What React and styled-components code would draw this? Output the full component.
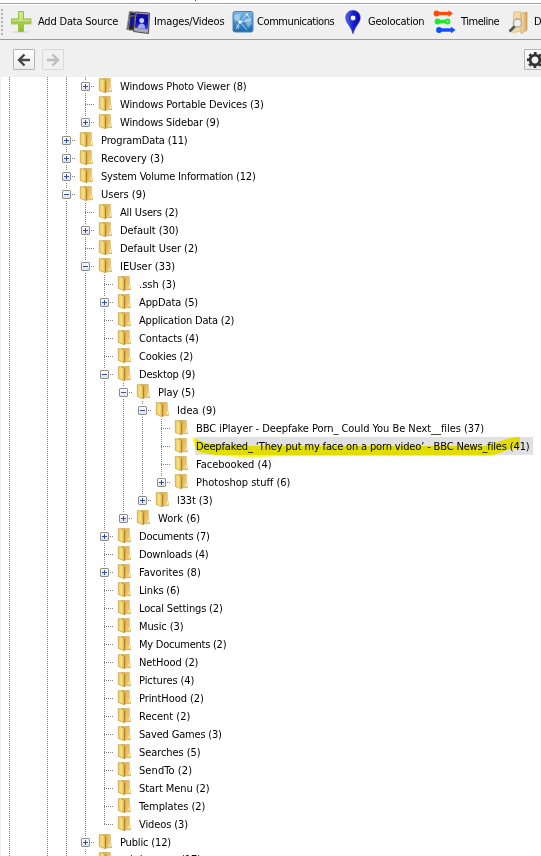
import React from "react";
import styled, { createGlobalStyle, css } from "styled-components";

const Global = createGlobalStyle`
  * { box-sizing: border-box; }
  body { margin: 0; background: #fff; overflow: hidden; }
`;

const Window = styled.main`
  width: 541px;
  height: 856px;
  overflow: hidden;
  display: flex;
  flex-direction: column;
  background: #f0f0f0;
  color: #000;
  font: 11px/18px "DejaVu Sans Condensed", "DejaVu Sans", sans-serif;
  white-space: nowrap;
`;
const TopEdge = styled.div`
  height: 4px;
  flex: none;
  background: #fff;
  border-bottom: 1px solid #a0a0a0;
  position: relative;
  &::after {
    content: "";
    position: absolute;
    left: 195px;
    top: 0;
    width: 1px;
    height: 1px;
    background: #555;
  }
`;
const Toolbar = styled.header`
  height: 36px;
  flex: none;
  display: flex;
  align-items: center;
  border-top: 1px solid #fff;
  border-bottom: 1px solid #9c9c9c;
`;
const Grip = styled.div`
  width: 2px;
  height: 27px;
  flex: none;
  margin: 0 8px 0 1px;
  background: repeating-linear-gradient(#b4b4b4 0 2px, transparent 2px 4px);
`;
const Tool = styled.div`
  display: flex;
  align-items: center;
  flex: none;
  width: ${(p) => p.$w}px;
  svg { flex: none; margin-right: ${(p) => p.$gap}px; }
`;
const Label = styled.span`
  display: inline-block;
  letter-spacing: ${(p) => p.$ls || 0}px;
`;
const NavBar = styled.nav`
  height: 37px;
  flex: none;
  display: flex;
  align-items: center;
  padding: 2px 0 0 13px;
  gap: 7px;
`;
const NavButton = styled.button`
  width: 22px;
  height: 21px;
  padding: 0;
  flex: none;
  display: grid;
  place-items: center;
  border: 1px solid ${(p) => (p.$off ? "#d9d9d9" : "#b4b4b4")};
  border-radius: 1px;
  background: ${(p) => (p.$off ? "#f0f0f0" : "linear-gradient(#fff, #ececec)")};
  color: ${(p) => (p.$off ? "#bdbdbd" : "#484848")};
  ${(p) => p.$end && css`margin-left: 453px;`}
`;
const Tree = styled.section`
  flex: 1;
  min-height: 0;
  overflow: hidden;
  background: #fff;
  box-shadow: inset 1px 0 #f0f0f0;
`;
const Row = styled.div`
  display: flex;
  height: 18px;
  svg { flex: none; margin-left: 3px; }
`;
const dotsV = "repeating-linear-gradient(#808080 0 1px, transparent 1px 2px)";
const dotsH = "repeating-linear-gradient(90deg, #808080 0 1px, transparent 1px 2px)";
const Guide = styled.i`
  width: 19px;
  height: 18px;
  flex: none;
  background: ${(p) => (p.$blank ? "none" : dotsV)} 9px 0 / 1px ${(p) => (p.$last ? 10 : 18)}px no-repeat
    ${(p) => p.$branch && css`, ${dotsH} 9px 9px / 10px 1px no-repeat`};
  display: grid;
  place-items: center;
`;
const Expander = styled.b`
  width: 9px;
  height: 9px;
  border: 1px solid #8c8c8c;
  border-radius: 1px;
  outline: 1px solid #fff;
  background:
    linear-gradient(#30509c, #30509c) 1px 3px / 5px 1px no-repeat,
    linear-gradient(#30509c, #30509c) 3px 1px / 1px ${(p) => (p.$open ? 0 : 5)}px no-repeat,
    linear-gradient(#fff, #e3e3e3);
`;
const NodeText = styled.span`
  margin-left: 5px;
  padding: 0 3px 0 1px;
  height: 18px;
  line-height: 20px;
  position: relative;
  letter-spacing: ${(p) => p.$ls || 0}px;
  background: ${(p) => (p.$selected ? "#e1e1e1" : "none")};
  ${Row}:last-child & { line-height: 17px; }
`;
const Marker = styled.svg`
  position: absolute;
  left: -4px;
  top: -1px;
  mix-blend-mode: multiply;
  && { margin: 0; }
`;

const Folder = () => (
  <svg width="16" height="18" viewBox="0 0 16 18">
    <defs>
      <linearGradient id="ff" x2="1"><stop stopColor="#e9c962" /><stop offset=".5" stopColor="#f7e184" /><stop offset="1" stopColor="#dcb44a" /></linearGradient>
      <linearGradient id="fb" x2="1" y2=".3"><stop stopColor="#cf9c3a" /><stop offset="1" stopColor="#f6cf72" /></linearGradient>
    </defs>
    <path d="M4.500 1.500h7.800v8.300l1.200 1v3.700L7 15z" fill="url(#fb)" stroke="#cfa44c" strokeWidth=".6" />
    <path d="M1.300 1.600 5 2l2.400 1.800v12L6 15.300 1.300 13.500z" fill="url(#ff)" stroke="#c39c40" strokeWidth=".7" />
    <path d="M7.600 4v11.300" stroke="#a87b22" strokeWidth=".9" />
    <path d="M12 10.500h1.500v3.200H12z" fill="#fff8dc" />
    <path d="M12.200 13.700h1.200v1h-1.200z" fill="#93b56c" />
  </svg>
);

const Plus = () => (
  <svg width="22" height="24" viewBox="0 0 22 24">
    <defs><linearGradient id="pg" x2="0" y2="1"><stop stopColor="#c5e276" /><stop offset="1" stopColor="#8dbd25" /></linearGradient></defs>
    <ellipse cx="10" cy="22" rx="9" ry="1.2" fill="#dcdcdc" />
    <path d="M7.500 1.500h5v7.400h7.500v5h-7.500v7.600h-5v-7.600H.5v-5h7z" fill="url(#pg)" stroke="#9cc046" />
    <path d="M8.500 2.500h3v7.400h7.500v1h-17.500v-1h7z" fill="#dcf0a2" opacity=".65" />
  </svg>
);
const Photos = () => (
  <svg width="25" height="25" viewBox="0 0 25 25">
    <defs><linearGradient id="ph" x2="0" y2="1"><stop stopColor="#1b169d" /><stop offset=".5" stopColor="#0504a8" /><stop offset="1" stopColor="#3b40f0" /></linearGradient></defs>
    <path d="M3.500 1.500 20 3.500 16 21 .8 19.500z" fill="#444" stroke="#8a8a8a" />
    <path d="m5 3.500 12 1-2.500 12-12-1z" fill="#0b0a80" />
    <path d="m4 6 9-.5-.500 15L2.500 20z" fill="#222" stroke="#999" strokeWidth=".8" />
    <path d="m4.500 7.500 7-.5-.5 9-7-.5z" fill="#1410a8" />
    <path d="m9.500 2 14 1-1 20.500-15-2z" fill="#a9a9a9" stroke="#4d4d4d" />
    <path d="m10.500 3.500 12 1-.8 14.700L8.800 17.700z" fill="url(#ph)" />
    <circle cx="15.700" cy="10.500" r="2.500" fill="#c5caff" /><path d="M11.700 18c.2-3 2-4.500 4-4.500s3.600 1.800 3.400 5.300z" fill="#9fa7ff" />
  </svg>
);
const Network = () => (
  <svg width="22" height="22" viewBox="0 0 22 22">
    <defs><linearGradient id="ng" x2="0" y2="1"><stop stopColor="#79b6e6" /><stop offset="1" stopColor="#1c69ae" /></linearGradient></defs>
    <rect x="1" y=".5" width="20" height="20.500" rx="2" fill="url(#ng)" stroke="#4a86b8" />
    <path d="M2 4l7-2-1 5-5 4zM12 8l5-1 3 5-4 5-2-5zM4 13l4 2-2 4z" fill="#b8dcf5" opacity=".55" />
    <g stroke="#fff" strokeWidth=".7" fill="none" opacity=".9"><path d="M2 6l6 5 7-8M8 11 4 18M8 11l11-2M8 11l7 8M15 3l4 6M5 4l3 7" /></g>
    <circle cx="8" cy="11" r="1.600" fill="#fff" /><circle cx="15" cy="3.500" r="1" fill="#fff" />
  </svg>
);
const Pin = () => (
  <svg width="18" height="26" viewBox="0 0 18 26">
    <defs><linearGradient id="pin" x2="1"><stop stopColor="#5664ed" /><stop offset=".5" stopColor="#1a20dd" /><stop offset="1" stopColor="#0607a8" /></linearGradient></defs>
    <path d="M8 1.500C3.800 1.500.8 4.500.8 8.800.8 14 5.500 16 8 24.700 10.500 16 15.200 14 15.200 8.800 15.200 4.500 12.200 1.500 8 1.500z" fill="url(#pin)" stroke="#3036a4" strokeWidth=".7" />
    <circle cx="8" cy="9" r="3" fill="#f4f4f4" stroke="#282baa" />
  </svg>
);
const TimelineIcon = () => (
  <svg width="24" height="24" viewBox="0 0 24 24">
    <g strokeWidth="3.400"><path d="M3 3.500h14" stroke="#ff4b09" /><path d="M5 11.500h8" stroke="#20e82c" /><path d="M6 20h13" stroke="#0b4dff" /></g>
    <circle cx="3.500" cy="3.500" r="2.900" fill="#ff4b09" /><path d="m15.500.3 4.500 3.200-4.500 3.200z" fill="#ff4b09" />
    <circle cx="4.500" cy="11.500" r="2.900" fill="#20e82c" /><circle cx="14.500" cy="11.500" r="1.900" fill="#d8ffd8" stroke="#20e82c" strokeWidth="2" />
    <circle cx="6" cy="20" r="2.900" fill="#0b4dff" /><path d="m18 16.800 4.500 3.200-4.500 3.200z" fill="#0b4dff" />
  </svg>
);
const Discovery = () => (
  <svg width="22" height="25" viewBox="0 0 22 25">
    <defs><linearGradient id="dg" x2="1"><stop stopColor="#f6dfad" /><stop offset="1" stopColor="#d4a65c" /></linearGradient></defs>
    <path d="M5.500 2 13 1.500l1 19-9 2.500z" fill="#f1d8a6" stroke="#d9ba86" strokeWidth=".7" />
    <path d="m13 3.500 6-1.500v18l-6 3.500z" fill="url(#dg)" stroke="#c79a58" strokeWidth=".7" />
    <path d="m7 16-5.500 5.500" stroke="#555" strokeWidth="2.600" />
    <circle cx="9.500" cy="13" r="4" fill="#f5f5ee" fillOpacity=".85" stroke="#aaa" strokeWidth="1.300" />
  </svg>
);
const Arrow = ({ right }) => (
  <svg width="14" height="14" viewBox="0 0 14 14" fill="none" stroke="currentColor" strokeWidth="2.400">
    <path d={right ? "M1 7h10.500M6.500 1.500 12 7l-5.500 5.500" : "M13 7H2.500M7.500 1.500 2 7l5.500 5.500"} />
  </svg>
);
const Gear = () => (
  <svg width="18" height="18" viewBox="-9 -9 18 18">
    <circle r="4.900" fill="none" stroke="#333" strokeWidth="2.800" />
    <circle r="6.900" fill="none" stroke="#333" strokeWidth="2.400" strokeDasharray="2.710 2.710" strokeDashoffset="1.350" />
  </svg>
);

// [label, depth, state, letter spacing, last sibling]; state: "+" collapsed, "-" expanded, "" leaf
const nodes = [
  ["Windows Photo Viewer (8)", 1, "+", -0.12],
  ["Windows Portable Devices (3)", 1, "", -0.13],
  ["Windows Sidebar (9)", 1, "+", -0.15, true],
  ["ProgramData (11)", 0, "+", -0.14],
  ["Recovery (3)", 0, "+", 0],
  ["System Volume Information (12)", 0, "+", -0.2],
  ["Users (9)", 0, "-", 0],
  ["All Users (2)", 1, "", -0.15],
  ["Default (30)", 1, "+", -0.08],
  ["Default User (2)", 1, "", -0.07],
  ["IEUser (33)", 1, "-", 0],
  [".ssh (3)", 2, "", 0],
  ["AppData (5)", 2, "+", -0.09],
  ["Application Data (2)", 2, "", -0.2],
  ["Contacts (4)", 2, "", -0.08],
  ["Cookies (2)", 2, "", -0.17],
  ["Desktop (9)", 2, "-", -0.17],
  ["Play (5)", 3, "-", -0.1],
  ["Idea (9)", 4, "-", 0.1],
  ["BBC iPlayer - Deepfake Porn_ Could You Be Next__files (37)", 5, "", -0.05],
  ["Deepfaked_ ‘They put my face on a porn video’ - BBC News_files (41)", 5, "", -0.15],
  ["Facebooked (4)", 5, "", 0],
  ["Photoshop stuff (6)", 5, "+", 0, true],
  ["l33t (3)", 4, "+", -0.1, true],
  ["Work (6)", 3, "+", 0, true],
  ["Documents (7)", 2, "+", -0.22],
  ["Downloads (4)", 2, "", -0.15],
  ["Favorites (8)", 2, "+", 0],
  ["Links (6)", 2, "", -0.2],
  ["Local Settings (2)", 2, "", -0.16],
  ["Music (3)", 2, "", -0.1],
  ["My Documents (2)", 2, "", -0.24],
  ["NetHood (2)", 2, "", -0.09],
  ["Pictures (4)", 2, "", -0.08],
  ["PrintHood (2)", 2, "", -0.08],
  ["Recent (2)", 2, "", 0],
  ["Saved Games (3)", 2, "", -0.18],
  ["Searches (5)", 2, "", -0.08],
  ["SendTo (2)", 2, "", 0.08],
  ["Start Menu (2)", 2, "", -0.08],
  ["Templates (2)", 2, "", -0.08],
  ["Videos (3)", 2, "", -0.1, true],
  ["Public (12)", 1, "+", -0.16],
  ["sshd_server (17)", 1, "+", -0.1],
];

export default function App() {
  return (
    <Window>
      <Global />
      <TopEdge />
      <Toolbar>
        <Grip />
        <Tool $w={115} $gap={5}><Plus /><Label $ls={-0.2}>Add Data Source</Label></Tool>
        <Tool $w={106} $gap={3}><Photos /><Label $ls={-0.15}>Images/Videos</Label></Tool>
        <Tool $w={113} $gap={3}><Network /><Label $ls={-0.42}>Communications</Label></Tool>
        <Tool $w={88} $gap={5}><Pin /><Label $ls={-0.26}>Geolocation</Label></Tool>
        <Tool $w={75} $gap={4}><TimelineIcon /><Label $ls={-0.48}>Timeline</Label></Tool>
        <Tool $w={80} $gap={4}><Discovery /><Label>Discovery</Label></Tool>
      </Toolbar>
      <NavBar>
        <NavButton><Arrow /></NavButton>
        <NavButton $off><Arrow right /></NavButton>
        <NavButton $end><Gear /></NavButton>
      </NavBar>
      <Tree>
        {nodes.map(([text, depth, state, spacing, last]) => {
          const selected = text.startsWith("Deepfaked_");
          return (
            <Row key={text}>
              <Guide /><Guide $blank /><Guide />
              {Array.from({ length: depth }, (_, i) => <Guide key={i} />)}
              <Guide $branch $last={last}>{state && <Expander $open={state === "-"} />}</Guide>
              <Folder />
              <NodeText $selected={selected} $ls={spacing}>
                {text}
                {selected && (
                  <Marker width="332" height="24" viewBox="0 0 332 24">
                    <path d="M1 1C8 5 15 8 30 9L60 10H292C305 8 315 1 329 1V12C316 12 311 18 298 20H90C50 22 12 20 5 14Z" fill="#fffb00" />
                  </Marker>
                )}
              </NodeText>
            </Row>
          );
        })}
      </Tree>
    </Window>
  );
}
